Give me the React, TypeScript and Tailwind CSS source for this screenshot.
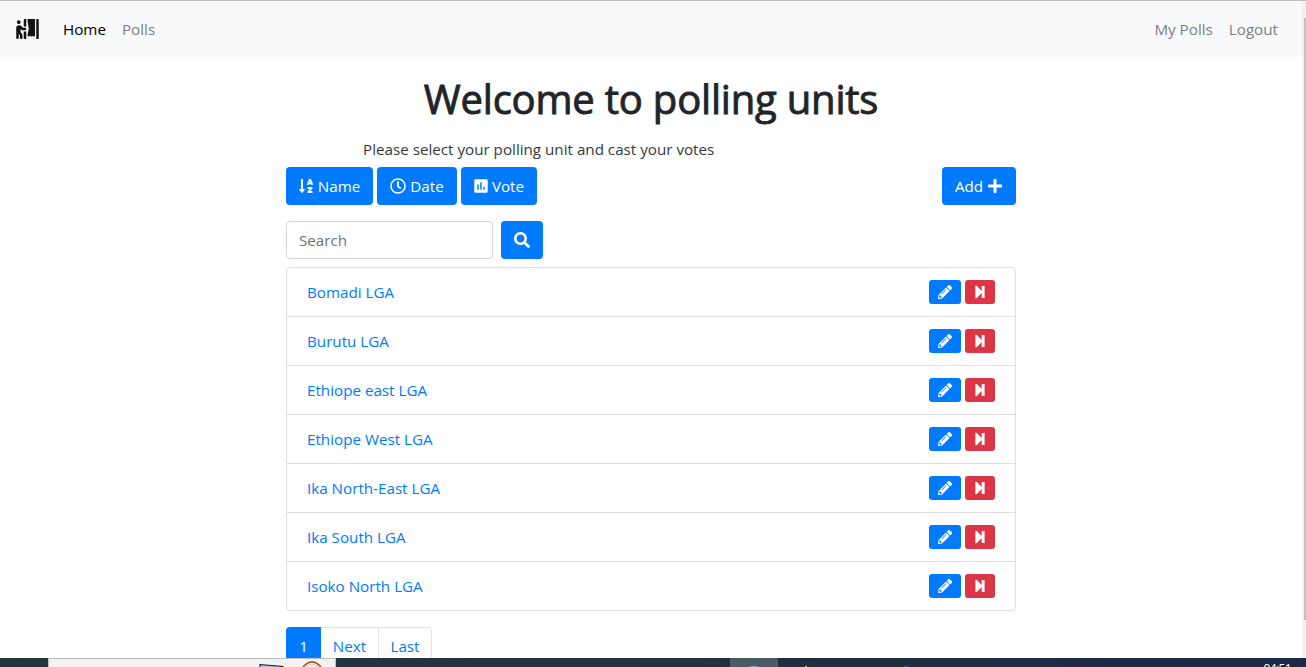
import React from "react";
import {
  FaPersonBooth,
  FaSortAlphaDown,
  FaRegClock,
  FaPlus,
  FaSearch,
  FaPencilAlt,
} from "react-icons/fa";
import { MdPoll } from "react-icons/md";

const units = [
  "Bomadi LGA",
  "Burutu LGA",
  "Ethiope east LGA",
  "Ethiope West LGA",
  "Ika North-East LGA",
  "Ika South LGA",
  "Isoko North LGA",
];

function SkipIcon() {
  return (
    <svg width="12" height="14" viewBox="0 0 12 14" fill="#fff">
      <path d="M1.4 0.8 H2.6 L7.7 5.9 V1.1 H10.6 V12.9 H7.7 V8.1 L2.6 13.2 H1.4 Z" />
    </svg>
  );
}

function Navbar() {
  return (
    <nav className="flex h-14 items-center bg-[#f8f9fa] pr-6 pl-4 text-[#7f7f7f]">
      <FaPersonBooth className="h-5 w-[23px] text-[#111]" />
      <a className="ml-6 text-black">Home</a>
      <a className="ml-4">Polls</a>
      <a className="ml-auto">My Polls</a>
      <a className="ml-4">Logout</a>
    </nav>
  );
}

function UnitRow({ name }: { name: string }) {
  return (
    <li className="flex h-[49px] items-center justify-between border-b border-[#dfdfdf] px-5 last:h-12 last:border-b-0">
      <a className="text-[#007bff]">{name}</a>
      <div className="flex gap-1">
        <button className="flex h-6 w-8 items-center justify-center rounded-[3px] bg-[#007bff] text-white">
          <FaPencilAlt size={14} />
        </button>
        <button className="flex h-6 w-[30px] items-center justify-center rounded-[3px] bg-[#dc3545]">
          <SkipIcon />
        </button>
      </div>
    </li>
  );
}

function Taskbar() {
  return (
    <footer className="flex h-[9px] shrink-0 overflow-hidden bg-linear-to-r from-[#21363e] via-[#20323f] to-[#1b2846]">
      <div className="ml-12 flex w-72 border-x border-t border-[#bdbdbd] bg-[#f2f2f2]">
        <svg width="286" height="8" viewBox="0 0 286 8" fill="none">
          <path d="M211 5.5 L234 7.5 V12 H211 Z" fill="#a9c9ec" stroke="#23233d" strokeWidth="1.2" />
          <path d="M254 8 Q263 -2 272 8" stroke="#8b4a2a" strokeWidth="1.3" />
          <path d="M255 9 Q263 1 271 9" stroke="#edc39d" strokeWidth="1" />
        </svg>
      </div>
      <div className="ml-[394px] flex w-12 justify-center bg-[#4b5b64]">
        <svg width="12" height="9">
          <ellipse cx="6" cy="11" rx="7" ry="3.2" fill="#25c4d9" />
        </svg>
      </div>
      <svg width="132" height="9">
        <rect x="27" y="8" width="2" height="1" fill="#d9bd20" />
        <ellipse cx="128.5" cy="9.5" rx="2.5" ry="1.5" fill="#1683c9" />
      </svg>
      <span className="mt-[4px] mr-[15px] ml-auto text-[12px] leading-[14px] tracking-[-0.6px] text-white">
        04:51
      </span>
    </footer>
  );
}

export default function App() {
  return (
    <div className="flex h-[667px] w-[1306px] flex-col overflow-hidden bg-white font-['Open_Sans','Noto_Sans',sans-serif] text-[15.2px] leading-6 text-[#212529]">
      <div className="flex h-[658px] overflow-hidden border-t border-[#bdbdc0]">
        <div className="h-full w-[1302px] overflow-hidden">
          <Navbar />
          <main className="mx-auto w-[730px] pt-[18px]">
            <h1 className="text-center text-[40px] leading-[48px] font-medium tracking-[-0.2px] [-webkit-text-stroke:0.9px_#212529]">
              Welcome to polling units
            </h1>
            <p className="mt-[14px] pl-[77px] text-[#343a40]">
              Please select your polling unit and cast your votes
            </p>
            <div className="mt-[6px] flex h-[38px] gap-1 text-white">
              <button className="flex w-[87px] items-center justify-center gap-1 rounded bg-[#007bff] pr-px">
                <FaSortAlphaDown size={16} />
                Name
              </button>
              <button className="flex w-20 items-center justify-center gap-1 rounded bg-[#007bff]">
                <FaRegClock size={16} />
                Date
              </button>
              <button className="flex w-[76px] items-center justify-center gap-0.5 rounded bg-[#007bff] pr-0.5">
                <MdPoll size={18} />
                Vote
              </button>
              <button className="ml-auto flex w-[74px] items-center justify-center gap-1 rounded bg-[#007bff]">
                Add
                <FaPlus size={16} />
              </button>
            </div>
            <form className="mt-4 flex h-[38px] gap-2">
              <input
                className="w-[207px] rounded border border-[#ced4da] px-3 placeholder:text-[#6c757d]"
                placeholder="Search"
              />
              <button className="flex w-[42px] items-center justify-center rounded bg-[#007bff] text-white">
                <FaSearch size={16} />
              </button>
            </form>
            <ul className="mt-2 rounded border border-[#dfdfdf]">
              {units.map((name) => (
                <UnitRow key={name} name={name} />
              ))}
            </ul>
            <div className="mt-4 flex h-[38px] text-[#007bff]">
              <a className="flex w-[35px] items-center justify-center rounded-l bg-[#007bff] text-white">1</a>
              <a className="flex w-[58px] items-center justify-center border-y border-r border-[#dee2e6]">Next</a>
              <a className="flex w-[53px] items-center justify-center rounded-r border-y border-r border-[#dee2e6]">Last</a>
            </div>
          </main>
        </div>
        <div className="flex w-1 flex-col items-end bg-[#f1f1f1] pt-[17px]">
          <div className="h-[602px] w-0.5 bg-[#c1c1c1]" />
        </div>
      </div>
      <Taskbar />
    </div>
  );
}
